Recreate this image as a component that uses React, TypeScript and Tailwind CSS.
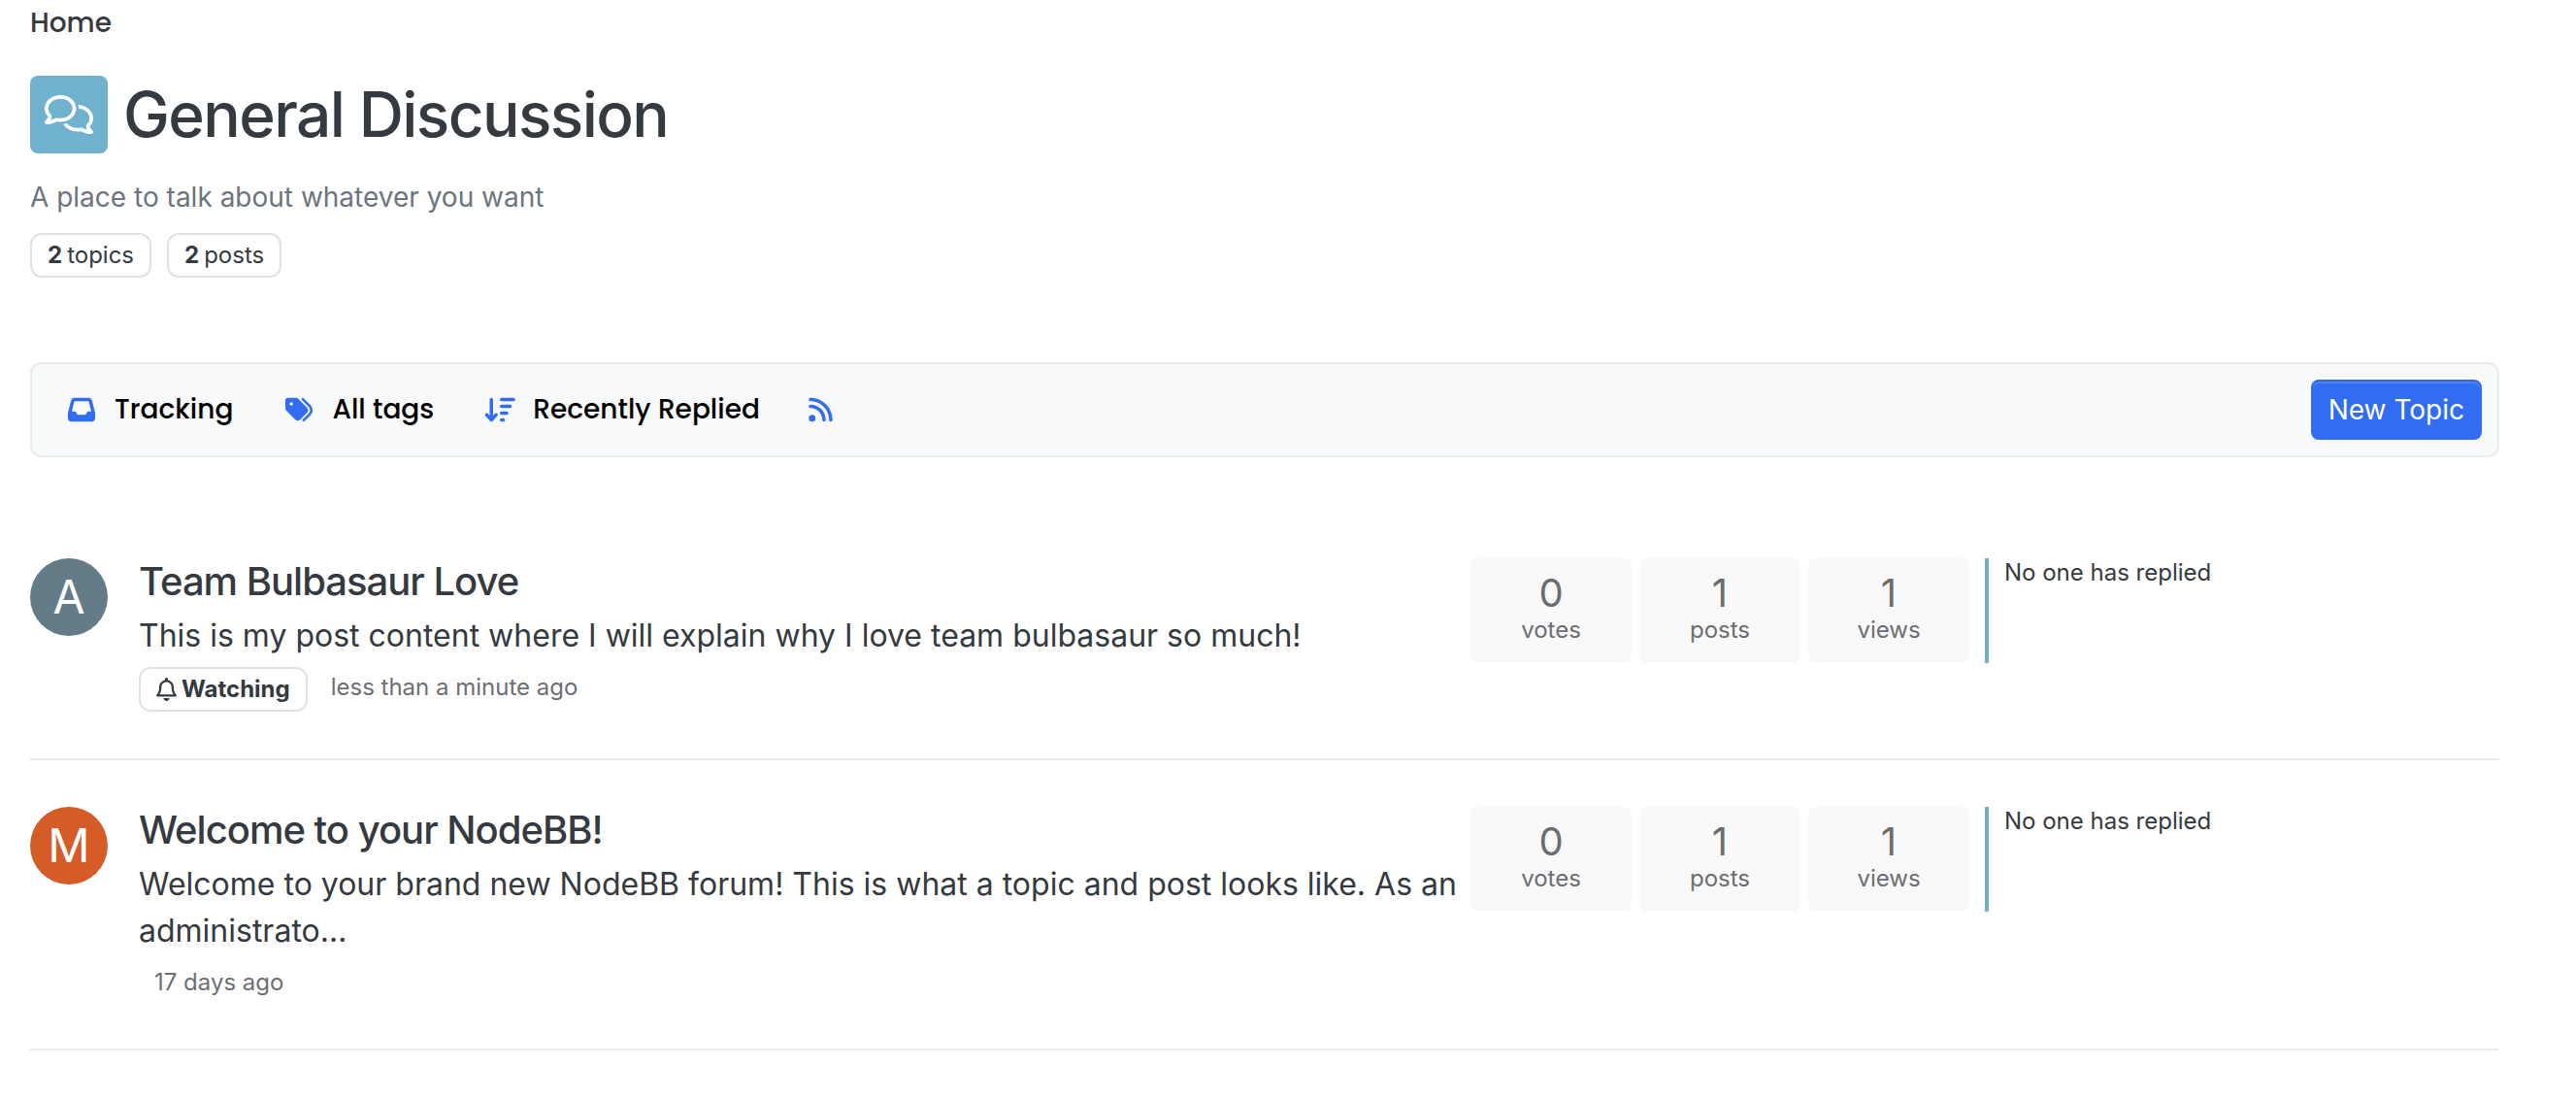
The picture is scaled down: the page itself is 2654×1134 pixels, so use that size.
import type { ReactNode } from "react";
import { FaRegBell, FaRegComments, FaInbox, FaTags, FaRss, FaArrowDownWideShort } from "react-icons/fa6";

type Topic = {
  initial: string;
  avatar: string;
  title: string;
  teaser: string;
  time: string;
  watching: boolean;
  stats: { label: string; value: number }[];
};

const topics: Topic[] = [
  {
    initial: "A",
    avatar: "bg-[#647b88]",
    title: "Team Bulbasaur Love",
    teaser: "This is my post content where I will explain why I love team bulbasaur so much!",
    time: "less than a minute ago",
    watching: true,
    stats: [
      { label: "votes", value: 0 },
      { label: "posts", value: 1 },
      { label: "views", value: 1 },
    ],
  },
  {
    initial: "M",
    avatar: "bg-[#d55b27]",
    title: "Welcome to your NodeBB!",
    teaser:
      "Welcome to your brand new NodeBB forum! This is what a topic and post looks like. As an administrato...",
    time: "17 days ago",
    watching: false,
    stats: [
      { label: "votes", value: 0 },
      { label: "posts", value: 1 },
      { label: "views", value: 1 },
    ],
  },
];

function Badge({ children }: { children: ReactNode }) {
  return (
    <span className="inline-flex h-[46px] items-center gap-[5px] rounded-xl border-2 border-[#dee2e6] px-4 text-2xl leading-6">
      {children}
    </span>
  );
}

function ToolButton({ icon, label, name }: { icon: ReactNode; label?: string; name: string }) {
  return (
    <button
      type="button"
      aria-label={name}
      className="flex items-center gap-4 font-[Poppins,Inter,sans-serif] text-[28px] leading-[42px] font-medium text-black"
    >
      <span className={label ? "flex w-9 justify-center text-[#326cf3]" : "text-[#326cf3]"}>{icon}</span>
      {label}
    </button>
  );
}

function TopicRow({ topic }: { topic: Topic }) {
  return (
    <li className="grid grid-cols-[7fr_2.5fr_2.5fr] border-b-2 border-[#e9ecef] py-12">
      <div className="flex gap-8 pr-2">
        <a
          href="#user"
          className={`flex size-20 shrink-0 items-center justify-center rounded-full text-5xl text-white ${topic.avatar}`}
        >
          {topic.initial}
        </a>
        <div className="flex flex-col gap-2">
          <h2 className="text-[40px] leading-[48px] font-medium tracking-tight">
            <a href="#topic">{topic.title}</a>
          </h2>
          <p className="text-[32px] leading-[48px]">{topic.teaser}</p>
          <div className="flex gap-2">
            {topic.watching && (
              <Badge>
                <FaRegBell className="h-6 w-[21px]" />
                <span className="font-bold">Watching</span>
              </Badge>
            )}
            <a href="#time" className="px-4 text-2xl leading-[41px] text-[#6c6f73]">
              {topic.time}
            </a>
          </div>
        </div>
      </div>
      <dl className="grid grid-cols-3 gap-2 self-start pr-4 text-center text-[#6a6d71]">
        {topic.stats.map((stat) => (
          <div key={stat.label} className="flex h-[108px] flex-col-reverse justify-center rounded-lg bg-[#f9f9f9]">
            <dt className="text-2xl leading-9">{stat.label}</dt>
            <dd className="text-[40px] leading-10">{stat.value}</dd>
          </div>
        ))}
      </dl>
      <div className="h-[108px] border-l-4 border-[#72b0c6] pl-4 text-2xl leading-[30px]">No one has replied</div>
    </li>
  );
}

export default function App() {
  return (
    <main className="min-h-screen bg-white pr-[79px] pl-[31px] font-[Inter,sans-serif] text-[#343a40]">
      <nav
        aria-label="Breadcrumb"
        className="pt-1 font-[Poppins,Inter,sans-serif] text-[28px] leading-10 font-medium"
      >
        <a href="#home">Home</a>
      </nav>
      <header className="pt-[34px]">
        <div className="flex items-center gap-4">
          <span className="flex size-20 items-center justify-center rounded-lg bg-[#70b1cd] text-[50px] text-white">
            <FaRegComments />
          </span>
          <h1 className="text-[64px] leading-[80px] font-medium tracking-tight">General Discussion</h1>
        </div>
        <p className="pt-6 text-[28px] leading-[42px] text-[#6c757d]">A place to talk about whatever you want</p>
        <div className="flex gap-4 pt-4">
          <Badge>
            <b>2</b> topics
          </Badge>
          <Badge>
            <b>2</b> posts
          </Badge>
        </div>
      </header>
      <div className="mt-[87px] flex items-center justify-between rounded-xl border-2 border-[#e9ecef] bg-[#f8f9fa] p-4 pl-[33px]">
        <div className="flex items-center gap-[50px]">
          <ToolButton icon={<FaInbox />} label="Tracking" name="Tracking" />
          <ToolButton icon={<FaTags />} label="All tags" name="All tags" />
          <ToolButton
            icon={<FaArrowDownWideShort className="h-7 w-8" />}
            label="Recently Replied"
            name="Recently Replied"
          />
          <ToolButton icon={<FaRss className="h-7 w-[25px]" />} name="RSS feed" />
        </div>
        <button
          type="button"
          className="h-[62px] rounded-lg border-2 border-[#326cf3] border-t-[#3a66d6] bg-[#326cf3] px-4 text-[28px] leading-[42px] text-white shadow-[inset_0_2px_0_rgba(255,255,255,0.15)]"
        >
          New Topic
        </button>
      </div>
      <ul className="pt-14">
        {topics.map((topic) => (
          <TopicRow key={topic.title} topic={topic} />
        ))}
      </ul>
    </main>
  );
}
